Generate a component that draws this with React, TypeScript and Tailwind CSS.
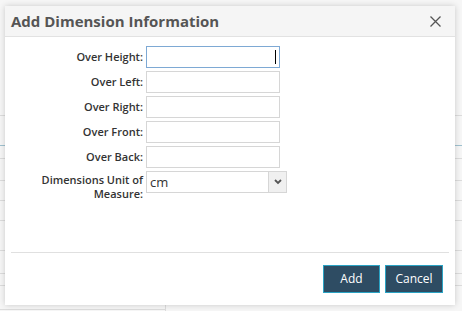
import React from "react";

const fields = ["Over Height:", "Over Left:", "Over Right:", "Over Front:", "Over Back:"];

const PageLines = () => (
  <div className="absolute inset-0 bg-[#f6f6f6]">
    {[115, 158, 180, 200, 220, 250, 273, 285].map((y) => (
      <div key={y} className="absolute left-0 right-0 h-px bg-[#dcdcdc]" style={{ top: y }} />
    ))}
    <div className="absolute left-0 right-0 h-px bg-[#9fc1cf]" style={{ top: 145 }} />
    <div className="absolute left-0 w-[166px] h-px bg-[#dcdcdc]" style={{ top: 309 }} />
    <div className="absolute left-[165px] top-[300px] w-px h-[11px] bg-[#dcdcdc]" />
  </div>
);

export default function App() {
  return (
    <div
      className="relative w-[462px] h-[311px] overflow-hidden"
      style={{ fontFamily: '"Open Sans", "Noto Sans", sans-serif' }}
    >
      <PageLines />
      <div className="relative ml-[5px] mt-[6px] w-[450px] h-[299px] bg-white shadow-[0_0_6px_rgba(0,0,0,0.18)] flex flex-col">
        <div className="h-[31px] bg-[#f5f5f5] border-b border-[#e2e2e2] flex items-center justify-between pl-[6px] pr-[14px]">
          <span className="text-[15px] font-bold text-[#555555] leading-none">Add Dimension Information</span>
          <svg width="11" height="11" viewBox="0 0 11 11" className="text-[#555]">
            <path d="M0.5 0.5 L10.5 10.5 M10.5 0.5 L0.5 10.5" stroke="currentColor" strokeWidth="1.3" />
          </svg>
        </div>
        <div className="flex-1 flex flex-col pt-[9px] gap-[3px]">
          {fields.map((f, i) => (
            <div key={f} className="flex items-center h-[22px]">
              <label className="w-[141px] text-right pr-[3px] text-[11px] font-semibold text-[#333]">{f}</label>
              <div
                className={`relative w-[134px] h-[22px] border ${i === 0 ? "border-[#7ea9d4]" : "border-[#d6d6d6]"} bg-white`}
              >
                {i === 0 && <div className="absolute right-[3px] top-[3px] w-px h-[14px] bg-black" />}
              </div>
            </div>
          ))}
          <div className="flex items-start">
            <label className="w-[141px] text-right pr-[3px] text-[11px] font-semibold text-[#333] leading-[14px] pt-[2px] pl-[30px]">
              Dimensions Unit of Measure:
            </label>
            <div className="w-[141px] h-[22px] border border-[#d6d6d6] flex">
              <span className="flex-1 text-[13px] text-[#333] pl-[3px] leading-[20px]">cm</span>
              <div className="w-[18px] border-l border-[#d6d6d6] bg-[#f0f0f0] flex items-center justify-center">
                <svg width="8" height="6" viewBox="0 0 8 6">
                  <path d="M1 1 L4 4 L7 1" fill="none" stroke="#555" strokeWidth="1.8" />
                </svg>
              </div>
            </div>
          </div>
        </div>
        <div className="mx-[6px] h-px bg-[#e0e0e0]" />
        <div className="h-[52px] flex justify-end items-start pt-[12px] pr-[12px] gap-[5px]">
          <button className="w-[57px] h-[28px] bg-[#2e4c63] border border-[#2aa3c4] text-white text-[12px]">Add</button>
          <button className="w-[58px] h-[28px] bg-[#2e4c63] border border-[#2aa3c4] text-white text-[12px]">Cancel</button>
        </div>
      </div>
    </div>
  );
}
